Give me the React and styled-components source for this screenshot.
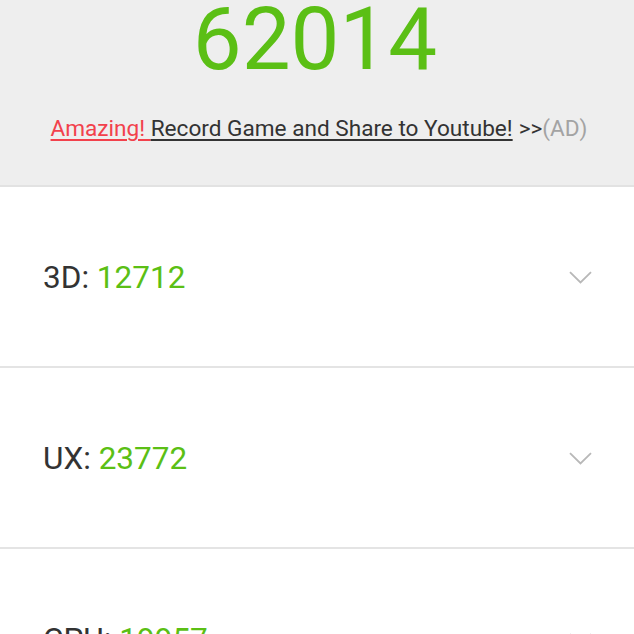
import React from "react";
import styled, { createGlobalStyle } from "styled-components";

const Global = createGlobalStyle`
  html, body { margin: 0; padding: 0; background: #ffffff; }
  body { font-family: Roboto, "Noto Sans", "Liberation Sans", sans-serif; overflow: hidden; }
`;

const Page = styled.div`
  width: 634px;
  height: 634px;
  overflow: hidden;
  display: flex;
  flex-direction: column;
`;

const Header = styled.header`
  flex: none;
  background: #eeeeee;
  border-bottom: 2px solid #e2e2e2;
  display: flex;
  flex-direction: column;
  align-items: center;
  padding: 6px 0 0 4px;
  height: 179px;
  box-sizing: content-box;
  width: 630px;
`;

const Total = styled.div`
  font-size: 87px;
  line-height: 66px;
  color: #5bbf15;
  margin-left: -8px;
`;

const Ad = styled.div`
  margin-top: 44px;
  font-size: 22.6px;
  line-height: 26px;
  white-space: nowrap;
`;

const AdLink = styled.span`
  color: ${(p) => p.$color};
  text-decoration: underline;
  text-decoration-thickness: 1.5px;
  text-underline-offset: 3px;
`;

const Arrow = styled.span`
  color: #333333;
  margin-left: 6px;
`;

const AdTag = styled.span`
  color: #a3a3a3;
`;

const Row = styled.div`
  flex: none;
  height: 178px;
  border-bottom: 2px solid #e4e4e4;
  display: flex;
  align-items: center;
  justify-content: space-between;
  padding: 1px 42px 0 43px;
  box-sizing: content-box;
  background: #ffffff;
`;

const Label = styled.div`
  font-size: 31.5px;
  color: #333333;
  white-space: nowrap;
`;

const Score = styled.span`
  color: #5bbf15;
`;

const Chevron = () => (
  <svg width="23" height="13" viewBox="0 0 23 13" fill="none">
    <path d="M1 1.2 L11.5 11.5 L22 1.2" stroke="#b8b8b8" strokeWidth="1.8" />
  </svg>
);

const rows = [
  { name: "3D", score: "12712" },
  { name: "UX", score: "23772" },
  { name: "CPU", score: "19957" },
];

export default function App() {
  return (
    <Page>
      <Global />
      <Header>
        <Total>62014</Total>
        <Ad>
          <AdLink $color="#f2414c">Amazing! </AdLink>
          <AdLink $color="#333333">Record Game and Share to Youtube!</AdLink>
          <Arrow>&gt;&gt;</Arrow>
          <AdTag>(AD)</AdTag>
        </Ad>
      </Header>
      {rows.map((r) => (
        <Row key={r.name}>
          <Label>
            {r.name}: <Score>{r.score}</Score>
          </Label>
          <Chevron />
        </Row>
      ))}
    </Page>
  );
}
